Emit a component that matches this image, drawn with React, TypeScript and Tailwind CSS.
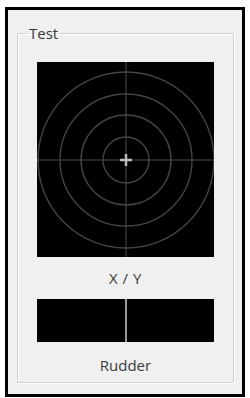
const FONT = { fontFamily: '"Open Sans", "Noto Sans", sans-serif' };

function Radar() {
  const w = 177;
  const h = 195;
  const cx = 89;
  const cy = 98;
  return (
    <svg width={w} height={h} className="block bg-black">
      {[88, 66, 45, 23].map((r) => (
        <circle key={r} cx={cx} cy={cy} r={r} fill="none" stroke="#444" strokeWidth="1.4" />
      ))}
      <line x1={0} y1={cy} x2={w} y2={cy} stroke="#4d4d4d" strokeWidth="1" />
      <line x1={cx} y1={0} x2={cx} y2={h} stroke="#4d4d4d" strokeWidth="1" />
      <line x1={cx - 6} y1={cy} x2={cx + 6} y2={cy} stroke="#bbb" strokeWidth="2.5" />
      <line x1={cx} y1={cy - 6} x2={cx} y2={cy + 6} stroke="#bbb" strokeWidth="2.5" />
    </svg>
  );
}

export default function App() {
  return (
    <div className="h-[398px] w-[250px] bg-white pl-[5px] pt-[7px]" style={FONT}>
      <div className="h-[390px] w-[240px] border-[3px] border-black bg-[#f0f0f0] pl-[9px] pt-[16px]">
        <fieldset className="h-[357px] w-[217px] rounded-[2px] border border-[#d0d0d0] shadow-[inset_1px_1px_0_#fff,1px_1px_0_#fff]">
          <legend className="ml-[9px] px-[2px] text-[15px] leading-[14px] text-[#3a3a3a]">Test</legend>
          <div className="flex flex-col items-center pt-[22px]">
            <Radar />
            <div className="mt-[12px] text-[15px] leading-[18px] tracking-[0.5px] text-[#3a3a3a]">X / Y</div>
            <div className="mt-[12px] flex h-[43px] w-[177px] bg-black">
              <div className="flex-1" />
              <div className="w-[2px] bg-[#9a9a9a]" />
              <div className="flex-1" />
            </div>
            <div className="mt-[14px] text-[15px] leading-[18px] text-[#3a3a3a]">Rudder</div>
          </div>
        </fieldset>
      </div>
    </div>
  );
}
